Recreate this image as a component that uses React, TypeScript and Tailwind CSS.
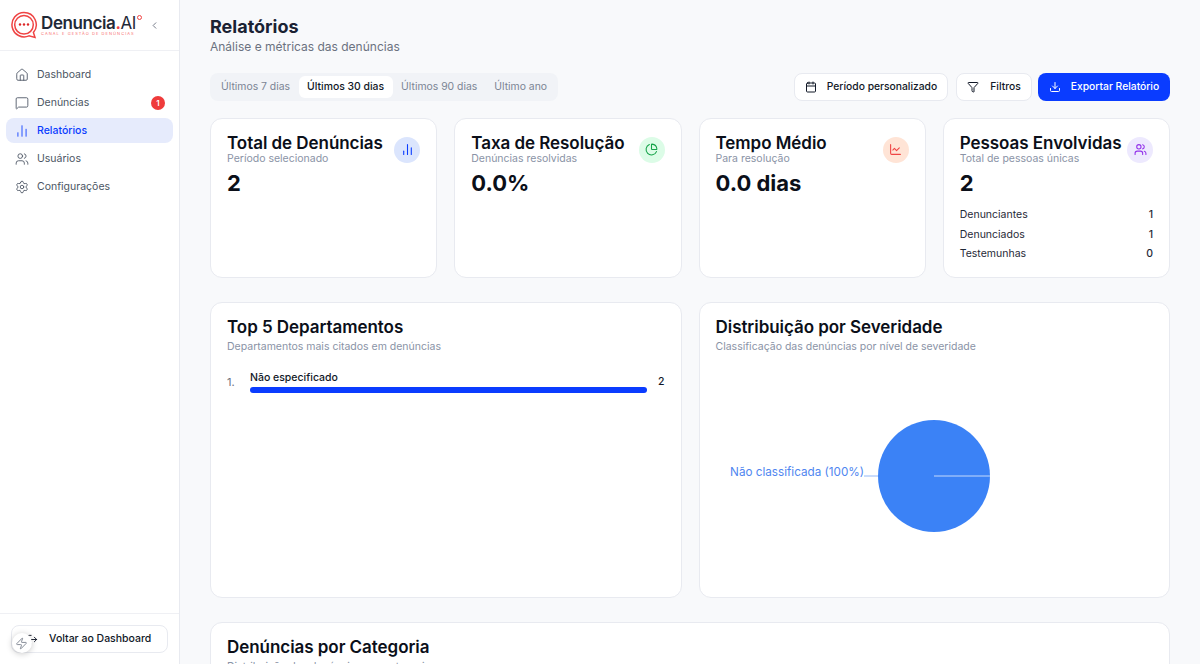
import { Calendar, ChartLine, ChartNoAxesColumn, ChevronLeft, Download, Filter, Home, LogOut, MessageSquare, PieChart, Settings, Users, Zap } from 'lucide-react';
import type { ReactNode } from 'react';

function Logo() {
  return (
    <div className="flex items-center">
      <svg width="28" height="28" viewBox="0 0 28 28" fill="none" className="mt-[-1px] shrink-0">
        <path d="M14 1.5a12.2 12.2 0 1 0 5 23.4l6 1.6-1.6-5A12.2 12.2 0 0 0 14 1.5Z" stroke="#ef4444" strokeWidth="1.5" />
        <path d="M14 4.5a9.3 9.3 0 1 0 0 18.6 9.3 9.3 0 0 0 0-18.6Z" stroke="#ef4444" strokeWidth="1.5" />
        <circle cx="10" cy="13.5" r="1.2" fill="#dc2626" />
        <circle cx="14" cy="13.5" r="1.2" fill="#dc2626" />
        <circle cx="18" cy="13.5" r="1.2" fill="#dc2626" />
      </svg>
      <div className="ml-[3px] flex flex-col">
        <div className="flex items-start">
          <span className="text-[17px] leading-[18px] font-semibold tracking-[-0.4px] text-[#1f2937]">
            Denuncia<span className="text-[#ef4444]">.</span><span className="font-normal">AI</span>
          </span>
          <span className="mt-[1px] ml-[1px] h-[5px] w-[5px] rounded-full border border-[#ef4444]" />
        </div>
        <span className="text-[4px] leading-[4px] tracking-[1.05px] whitespace-nowrap text-[#f87171] uppercase">Canal e gestão de denúncias</span>
      </div>
    </div>
  );
}

function NavItem({ icon, label, active, badge }: { icon: ReactNode; label: string; active?: boolean; badge?: string }) {
  return (
    <div className={`flex h-[25px] items-center rounded-lg px-[9px] text-[10.5px] ${active ? 'bg-[#e6ebfc] font-medium text-[#0a3cff]' : 'text-[#4b5563]'}`}>
      <span className="mr-[8px] flex w-[14px] justify-center">{icon}</span>
      <span>{label}</span>
      {badge && (
        <span className="mr-[-1px] ml-auto flex h-[14px] w-[14px] items-center justify-center rounded-full bg-[#ef3b3b] text-[8px] font-semibold text-white">{badge}</span>
      )}
    </div>
  );
}

function Sidebar() {
  return (
    <aside className="flex h-full w-[180px] shrink-0 flex-col border-r border-[#e8eaf0] bg-white">
      <div className="flex h-[51px] items-center border-b border-[#eff0f4] pr-[19px] pl-[10px]">
        <Logo />
        <ChevronLeft size={11} className="ml-auto shrink-0 text-[#6b7280]" />
      </div>
      <nav className="flex flex-col gap-[3px] px-[6px] pt-[11px]">
        <NavItem icon={<Home size={14} strokeWidth={1.5} />} label="Dashboard" />
        <NavItem icon={<MessageSquare size={14} strokeWidth={1.5} />} label="Denúncias" badge="1" />
        <NavItem icon={<ChartNoAxesColumn size={14} strokeWidth={1.5} />} label="Relatórios" active />
        <NavItem icon={<Users size={14} strokeWidth={1.5} />} label="Usuários" />
        <NavItem icon={<Settings size={14} strokeWidth={1.5} />} label="Configurações" />
      </nav>
      <div className="relative mt-auto border-t border-[#eff0f4] px-[11px] pt-[11px] pb-[11px]">
        <div className="flex h-[28px] items-center rounded-lg border border-[#e8eaf0] bg-white pl-[15px] text-[10.5px] font-medium text-[#111827]">
          <LogOut size={11} className="mr-[11px] shrink-0" />
          Voltar ao Dashboard
        </div>
        <span className="absolute top-[19px] left-[11.5px] flex h-[20px] w-[20px] items-center justify-center rounded-full bg-white shadow-[0_1px_6px_rgba(0,0,0,0.22)]">
          <Zap size={13} strokeWidth={1.5} className="text-[#6b7280]" />
        </span>
      </div>
    </aside>
  );
}

function StatCard({ title, sub, value, icon, tint, children }: { title: string; sub: string; value: string; icon: ReactNode; tint: string; children?: ReactNode }) {
  return (
    <div className="flex h-[160px] flex-col rounded-xl border border-[#e8eaf0] bg-white px-[16px] pt-[15.3px]">
      <div className="flex items-start justify-between">
        <div>
          <h3 className="text-[17px] leading-[19px] font-semibold tracking-[-0.05px] whitespace-nowrap text-[#0b0f19]">{title}</h3>
          <p className="text-[10.5px] leading-[12px] text-[#8a93a6]">{sub}</p>
        </div>
        <span className={`mt-[3px] flex h-[26px] w-[26px] shrink-0 items-center justify-center rounded-full ${tint}`}>{icon}</span>
      </div>
      <div className="mt-[5px] text-[22px] leading-[26px] font-bold text-[#0b0f19]">{value}</div>
      {children}
    </div>
  );
}

function PersonRow({ label, value }: { label: string; value: string }) {
  return (
    <div className="flex h-[19.6px] items-center justify-between text-[10.5px] text-[#1f2937]">
      <span>{label}</span>
      <span className="font-medium">{value}</span>
    </div>
  );
}

function Panel({ title, sub, children }: { title: string; sub: string; children?: ReactNode }) {
  return (
    <div className="h-[296px] rounded-xl border border-[#e8eaf0] bg-white px-[16px] pt-[14.3px]">
      <h3 className="text-[17px] leading-[20px] font-semibold tracking-[-0.05px] text-[#0b0f19]">{title}</h3>
      <p className="mt-[3px] text-[10.5px] leading-[14px] text-[#8a93a6]">{sub}</p>
      {children}
    </div>
  );
}

function SeverityPie() {
  return (
    <svg width="440" height="230" viewBox="0 0 440 230" className="mt-[2px]">
      <circle cx="218" cy="120" r="56" fill="#3b82f6" />
      <line x1="218" y1="120" x2="274" y2="120" stroke="#ffffff" strokeOpacity="0.7" strokeWidth="1" />
      <path d="M148 120h14" stroke="#93b8f8" strokeWidth="1" />
      <text x="148" y="120" textAnchor="end" fontSize="11.7" fill="#4f86f0">Não classificada (100%)</text>
    </svg>
  );
}

export default function App() {
  const ranges = ['Últimos 7 dias', 'Últimos 30 dias', 'Últimos 90 dias', 'Último ano'];
  return (
    <div className="flex h-screen overflow-hidden bg-[#f8f9fb] font-[Inter,sans-serif]">
      <Sidebar />
      <main className="min-w-0 flex-1 overflow-hidden px-[30px] pt-[17px]">
        <h1 className="text-[18px] leading-[20px] font-bold text-[#1a2233]">Relatórios</h1>
        <p className="mt-[2px] text-[12px] leading-[16px] text-[#6b7280]">Análise e métricas das denúncias</p>

        <div className="mt-[18px] flex items-center justify-between">
          <div className="flex h-[28px] items-center rounded-lg bg-[#f1f3f7] px-[2.500px] text-[10.4px] text-[#7b8494]">
            {ranges.map((r) => (
              <span key={r} className={`flex h-[22px] items-center rounded-md px-[8.500px] ${r === 'Últimos 30 dias' ? 'bg-white font-medium text-[#111827]' : ''}`}>{r}</span>
            ))}
          </div>
          <div className="flex text-[10.3px] font-medium">
            <button className="flex h-[28px] w-[154px] items-center justify-center rounded-lg border border-[#e8eaf0] bg-white text-[#111827]">
              <Calendar size={12} className="mr-[10px]" />Período personalizado
            </button>
            <button className="ml-[8px] flex h-[28px] w-[76px] items-center justify-center rounded-lg border border-[#e8eaf0] bg-white text-[#111827]">
              <Filter size={12} className="mr-[11px]" />Filtros
            </button>
            <button className="ml-[6px] flex h-[28px] w-[132px] items-center justify-center rounded-lg bg-[#0a3cff] text-white">
              <Download size={12} className="mr-[10px]" />Exportar Relatório
            </button>
          </div>
        </div>

        <div className="mt-[16.7px] grid grid-cols-4 gap-[17px]">
          <StatCard title="Total de Denúncias" sub="Período selecionado" value="2" tint="bg-[#dbe5fd]" icon={<ChartNoAxesColumn size={13} className="text-[#0a3cff]" />} />
          <StatCard title="Taxa de Resolução" sub="Denúncias resolvidas" value="0.0%" tint="bg-[#dcfce7]" icon={<PieChart size={13} className="text-[#16a34a]" />} />
          <StatCard title="Tempo Médio" sub="Para resolução" value="0.0 dias" tint="bg-[#ffe4d6]" icon={<ChartLine size={13} className="text-[#ef4444]" />} />
          <StatCard title="Pessoas Envolvidas" sub="Total de pessoas únicas" value="2" tint="bg-[#ede9fe]" icon={<Users size={13} className="text-[#9333ea]" />}>
            <div className="mt-[9px] flex flex-col">
              <PersonRow label="Denunciantes" value="1" />
              <PersonRow label="Denunciados" value="1" />
              <PersonRow label="Testemunhas" value="0" />
            </div>
          </StatCard>
        </div>

        <div className="mt-[24px] grid grid-cols-2 gap-[17px]">
          <Panel title="Top 5 Departamentos" sub="Departamentos mais citados em denúncias">
            <div className="mt-[17px] flex items-center">
              <span className="w-[23px] text-[11px] text-[#6b7280]">1.</span>
              <div className="flex-1">
                <div className="text-[10.5px] leading-[14px] font-medium text-[#111827]">Não especificado</div>
                <div className="mt-[2px] h-[6px] rounded-full bg-[#0a3cff]" />
              </div>
              <span className="ml-[11px] w-[6.500px] text-[10.5px] font-medium text-[#111827]">2</span>
            </div>
          </Panel>
          <Panel title="Distribuição por Severidade" sub="Classificação das denúncias por nível de severidade">
            <SeverityPie />
          </Panel>
        </div>

        <div className="mt-[24px]">
          <Panel title="Denúncias por Categoria" sub="Distribuição das denúncias por categoria" />
        </div>
      </main>
    </div>
  );
}
